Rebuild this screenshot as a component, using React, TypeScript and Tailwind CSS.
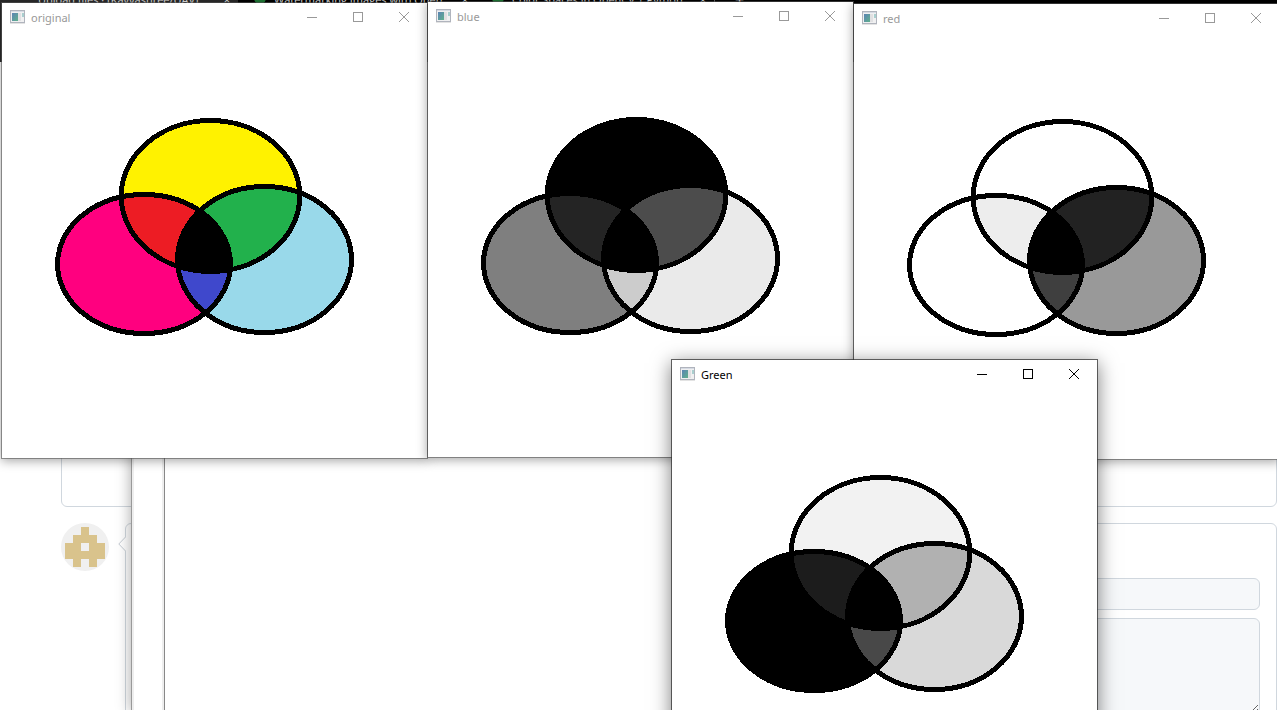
import React, { useId } from "react";
import clsx from "clsx";

type Palette = {
  top: string;
  left: string;
  right: string;
  topLeft: string;
  topRight: string;
  leftRight: string;
};

const ORIGINAL: Palette = {
  top: "#fff200",
  left: "#ff007f",
  right: "#99d9ea",
  topLeft: "#ed1c24",
  topRight: "#22b14c",
  leftRight: "#3f48cc",
};

const BLUE: Palette = {
  top: "#000000",
  left: "#7f7f7f",
  right: "#eaeaea",
  topLeft: "#242424",
  topRight: "#4c4c4c",
  leftRight: "#cccccc",
};

const RED: Palette = {
  top: "#ffffff",
  left: "#ffffff",
  right: "#999999",
  topLeft: "#ededed",
  topRight: "#222222",
  leftRight: "#3f3f3f",
};

const GREEN: Palette = {
  top: "#f2f2f2",
  left: "#000000",
  right: "#d9d9d9",
  topLeft: "#1c1c1c",
  topRight: "#b1b1b1",
  leftRight: "#484848",
};

const TOP = { cx: 209.5, cy: 194, rx: 89.3, ry: 75.5 };
const LEFT = { cx: 143, cy: 262, rx: 86.5, ry: 69.5 };
const RIGHT = { cx: 263.5, cy: 257.5, rx: 87, ry: 73 };

function Venn({ palette, label }: { palette: Palette; label: string }) {
  const id = useId();
  const topClip = `${id}-top`;
  const leftClip = `${id}-left`;
  return (
    <svg
      viewBox="1 31 425 425"
      role="img"
      aria-label={label}
      shapeRendering="crispEdges"
      className="block w-full"
    >
      <defs>
        <clipPath id={topClip}>
          <ellipse {...TOP} />
        </clipPath>
        <clipPath id={leftClip}>
          <ellipse {...LEFT} />
        </clipPath>
      </defs>
      <ellipse {...TOP} fill={palette.top} />
      <ellipse {...LEFT} fill={palette.left} />
      <ellipse {...RIGHT} fill={palette.right} />
      <ellipse {...RIGHT} fill={palette.leftRight} clipPath={`url(#${leftClip})`} />
      <g clipPath={`url(#${topClip})`}>
        <ellipse {...LEFT} fill={palette.topLeft} />
        <ellipse {...RIGHT} fill={palette.topRight} />
        <ellipse {...RIGHT} fill="#000" clipPath={`url(#${leftClip})`} />
      </g>
      <g fill="none" stroke="#000" strokeWidth="5">
        <ellipse {...TOP} />
        <ellipse {...LEFT} />
        <ellipse {...RIGHT} />
      </g>
    </svg>
  );
}

function AppIcon() {
  const fill = useId();
  return (
    <svg width="16" height="14" viewBox="0 0 16 14" aria-hidden="true" className="shrink-0">
      <defs>
        <linearGradient id={fill} x1="0" y1="0" x2="1" y2="1">
          <stop offset="0" stopColor="#5b83b5" />
          <stop offset="1" stopColor="#5fb08c" />
        </linearGradient>
      </defs>
      <rect x="0.5" y="0.5" width="14" height="12" fill="#f0f0f1" stroke="#b0b4bd" />
      <rect x="1" y="1" width="13" height="1" fill="#d5dae3" />
      <rect x="2" y="3" width="6" height="8" fill={`url(#${fill})`} />
      <rect x="8" y="3" width="3" height="8" fill="#e0e0e2" />
      <rect x="12" y="3" width="2" height="4" fill="#a9cfcf" />
      <rect x="0" y="13" width="15" height="1" fill="#e3e3e3" />
    </svg>
  );
}

const GLYPHS = {
  Minimize: "M0 5.5H10",
  Maximize: "M0.5 0.5H9.5V9.5H0.5Z",
  Close: "M0 0L10 10M10 0L0 10",
};

function ImageWindow({
  title,
  palette,
  active = false,
  place,
}: {
  title: string;
  palette: Palette;
  active?: boolean;
  place: string;
}) {
  return (
    <section
      aria-label={title}
      className={clsx(
        "absolute w-[427px] border bg-white bg-clip-padding",
        active
          ? "border-[#333333]/75 shadow-[0_4px_18px_rgba(0,0,0,0.5)]"
          : "border-[#555555]/60 shadow-[0_2px_10px_rgba(0,0,0,0.35)]",
        place,
      )}
    >
      <header
        className={clsx(
          "flex h-[30px] items-center pb-0.5 pl-2 font-['Noto_Sans',sans-serif] text-[11px] leading-4",
          active ? "text-black" : "text-[#999999]",
        )}
      >
        <AppIcon />
        <h2 className="flex-1 pl-[5px] pt-0.5">{title}</h2>
        {(Object.keys(GLYPHS) as (keyof typeof GLYPHS)[]).map((name) => (
          <button
            key={name}
            type="button"
            aria-label={name}
            className="flex h-full w-[46px] items-center justify-center"
          >
            <svg
              width="10"
              height="10"
              viewBox="0 0 10 10"
              fill="none"
              stroke="currentColor"
              shapeRendering={name === "Close" ? "auto" : "crispEdges"}
            >
              <path d={GLYPHS[name]} />
            </svg>
          </button>
        ))}
      </header>
      <Venn palette={palette} label={`${title} channel circles`} />
    </section>
  );
}

function Tab({ text, first = false }: { text: string; first?: boolean }) {
  return (
    <div
      className={clsx(
        "flex h-full w-[238px] shrink-0 items-start pr-2 text-[#e4e4e4]",
        first ? "bg-[#2b2b2b] pl-[38px]" : "bg-black pl-4",
      )}
    >
      {!first && <span className="mr-2 size-3 shrink-0 rounded-full bg-[#1f7a37]" />}
      <span className="flex-1 overflow-hidden whitespace-nowrap">{text}</span>
      <span className="pl-2">×</span>
    </div>
  );
}

function Avatar() {
  return (
    <svg
      width="48"
      height="48"
      viewBox="0 0 48 48"
      role="img"
      aria-label="User avatar"
      className="shrink-0"
    >
      <circle cx="24" cy="24" r="24" fill="#f0f0f0" />
      <path
        d="M20 4H28V12H36V20H44V36H36V44H28V36H20V44H12V36H4V20H12V12H20ZM20 20V28H28V20Z"
        fill="#d9c38c"
        fillRule="evenodd"
      />
    </svg>
  );
}

function Browser() {
  return (
    <div className="flex h-full flex-col">
      <div className="h-[62px] shrink-0 overflow-hidden bg-black">
        <div className="-mt-2 flex h-20 text-[11px] leading-4">
          <Tab first text="Upload files · [Kavyashree/UAV]" />
          <Tab text="Watermarking Images with Open" />
          <Tab text="Color Spaces in OpenCV | Python" />
          <span className="border-l border-[#666666] pl-5 text-base leading-4 text-[#e4e4e4]">
            +
          </span>
        </div>
      </div>
      <div className="flex flex-col gap-4 pl-[61px]">
        <div className="h-[445px] rounded-md border border-[#d0d7de]" />
        <div className="flex gap-4">
          <Avatar />
          <form className="relative flex-1 rounded-md border border-[#d0d7de] px-4 pb-4 pt-[54px]">
            <svg
              width="8"
              height="16"
              viewBox="0 0 8 16"
              aria-hidden="true"
              className="absolute -left-2 top-3"
            >
              <path d="M8 1V15" stroke="#fff" strokeWidth="2" />
              <path d="M8 0.5L0.8 8L8 15.5" fill="#fff" stroke="#c4cbd2" />
            </svg>
            <input
              type="text"
              aria-label="Commit title"
              className="block h-8 w-full rounded-md border border-[#d0d7de] bg-[#f6f8fa] px-3"
            />
            <textarea
              aria-label="Commit description"
              className="mt-2 block h-24 w-full resize-y rounded-md border border-[#d0d7de] bg-[#f6f8fa] px-3"
            />
          </form>
        </div>
      </div>
    </div>
  );
}

function Editor() {
  return (
    <div className="absolute bottom-0 left-[131px] right-[200px] top-[62px] flex border-l border-[#999999] bg-white shadow-[0_2px_14px_rgba(0,0,0,0.35)]">
      <div className="w-[32px] border-x-2 border-[#eeeeee]" />
      <div className="flex-1 border-l border-[#888888]" />
    </div>
  );
}

export default function App() {
  return (
    <main className="relative h-screen overflow-hidden bg-white font-['Open_Sans','Noto_Sans',sans-serif]">
      <Browser />
      <Editor />
      <ImageWindow title="original" palette={ORIGINAL} place="left-px top-0.5" />
      <ImageWindow title="blue" palette={BLUE} place="left-[427px] top-px" />
      <ImageWindow title="red" palette={RED} place="left-[853px] top-[3px]" />
      <ImageWindow title="Green" palette={GREEN} active place="left-[671px] top-[359px]" />
    </main>
  );
}
